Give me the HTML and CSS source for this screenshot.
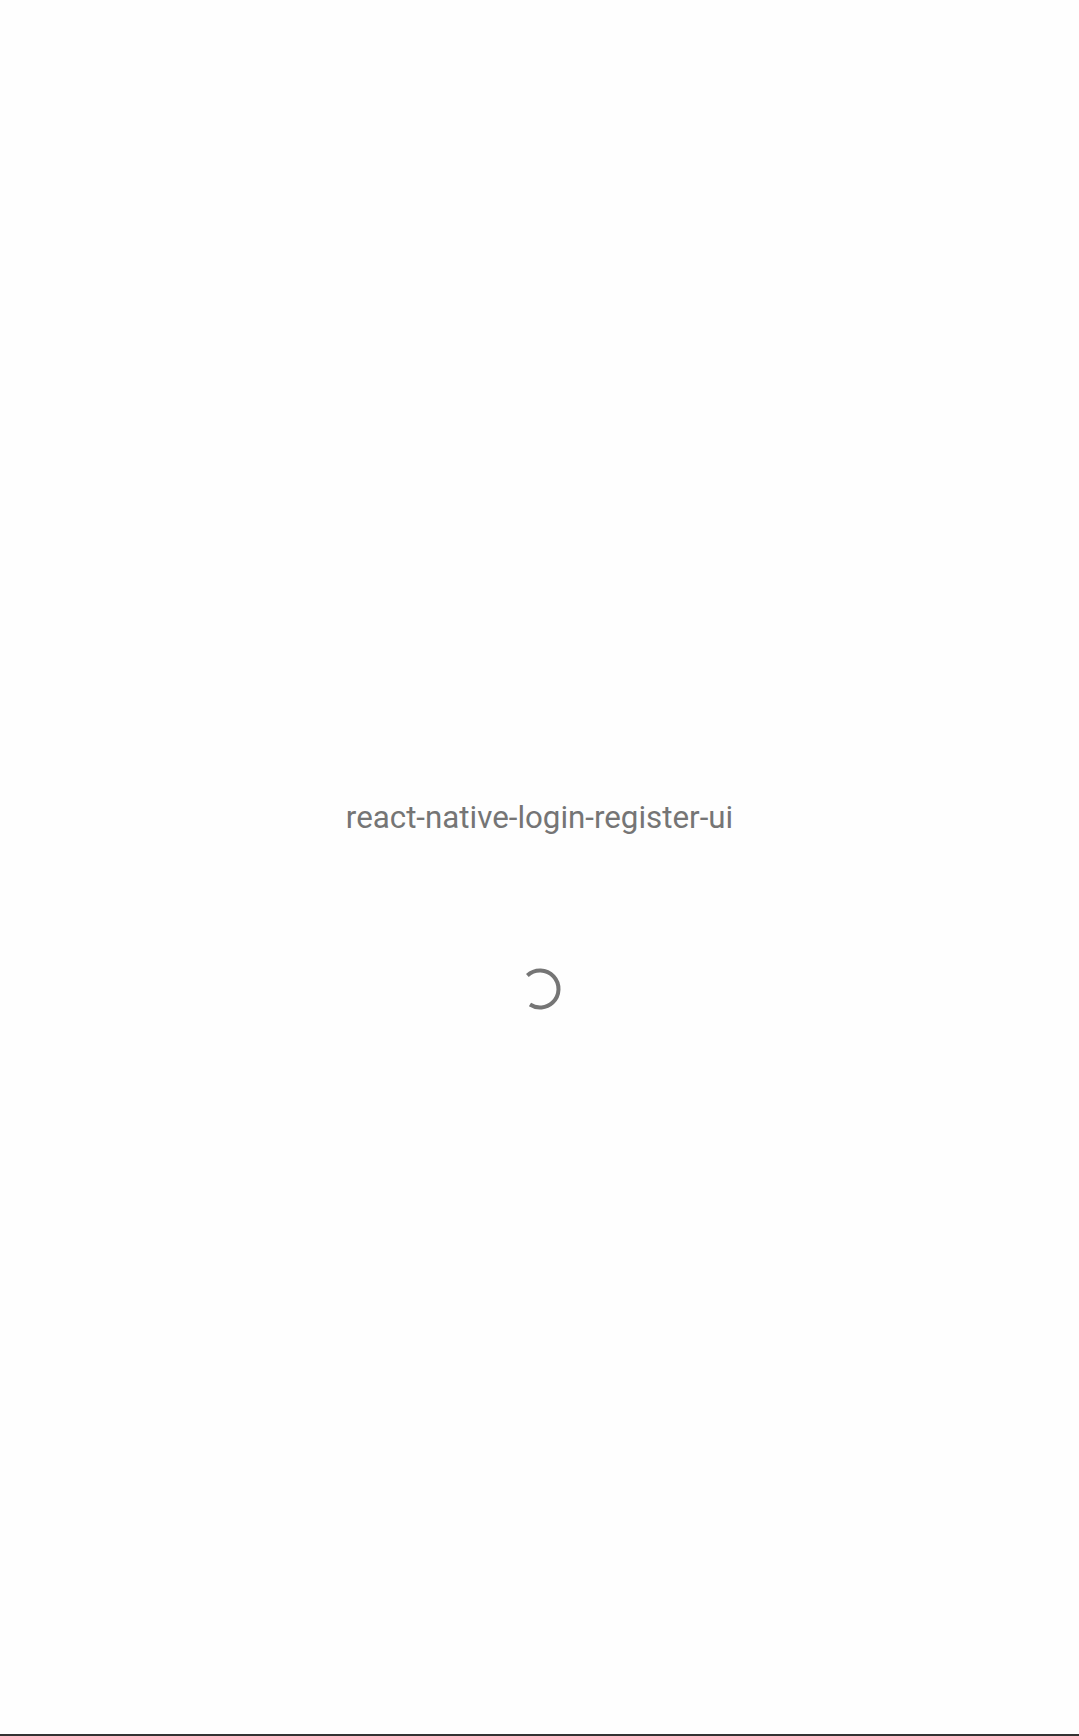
FILE: index.html
```html
<!DOCTYPE html>
<html>
<head>
<meta charset="utf-8">
<link rel="stylesheet" href="styles.css">
</head>
<body>
<div class="screen">
  <div class="title">react-native-login-register-ui</div>
  <div class="spinner">
    <svg width="48" height="48" viewBox="0 0 48 48">
      <circle cx="24" cy="24" r="18.5" fill="none" stroke="#757575" stroke-width="4" stroke-dasharray="82 200" transform="rotate(227 24 24)"/>
    </svg>
  </div>
</div>
</body>
</html>
```
FILE: styles.css
```css
html, body {
  margin: 0;
  padding: 0;
  background: #fefefe;
}
.screen {
  box-sizing: content-box;
  height: 940px;
  padding-top: 794px;
  border-bottom: 2px solid #333;
  display: flex;
  flex-direction: column;
  align-items: center;
}
.title {
  font-family: Roboto, "Liberation Sans", sans-serif;
  font-size: 31.3px;
  line-height: 48px;
  color: #757575;
}
.spinner {
  margin-top: 123px;
  width: 48px;
  height: 48px;
}
```
